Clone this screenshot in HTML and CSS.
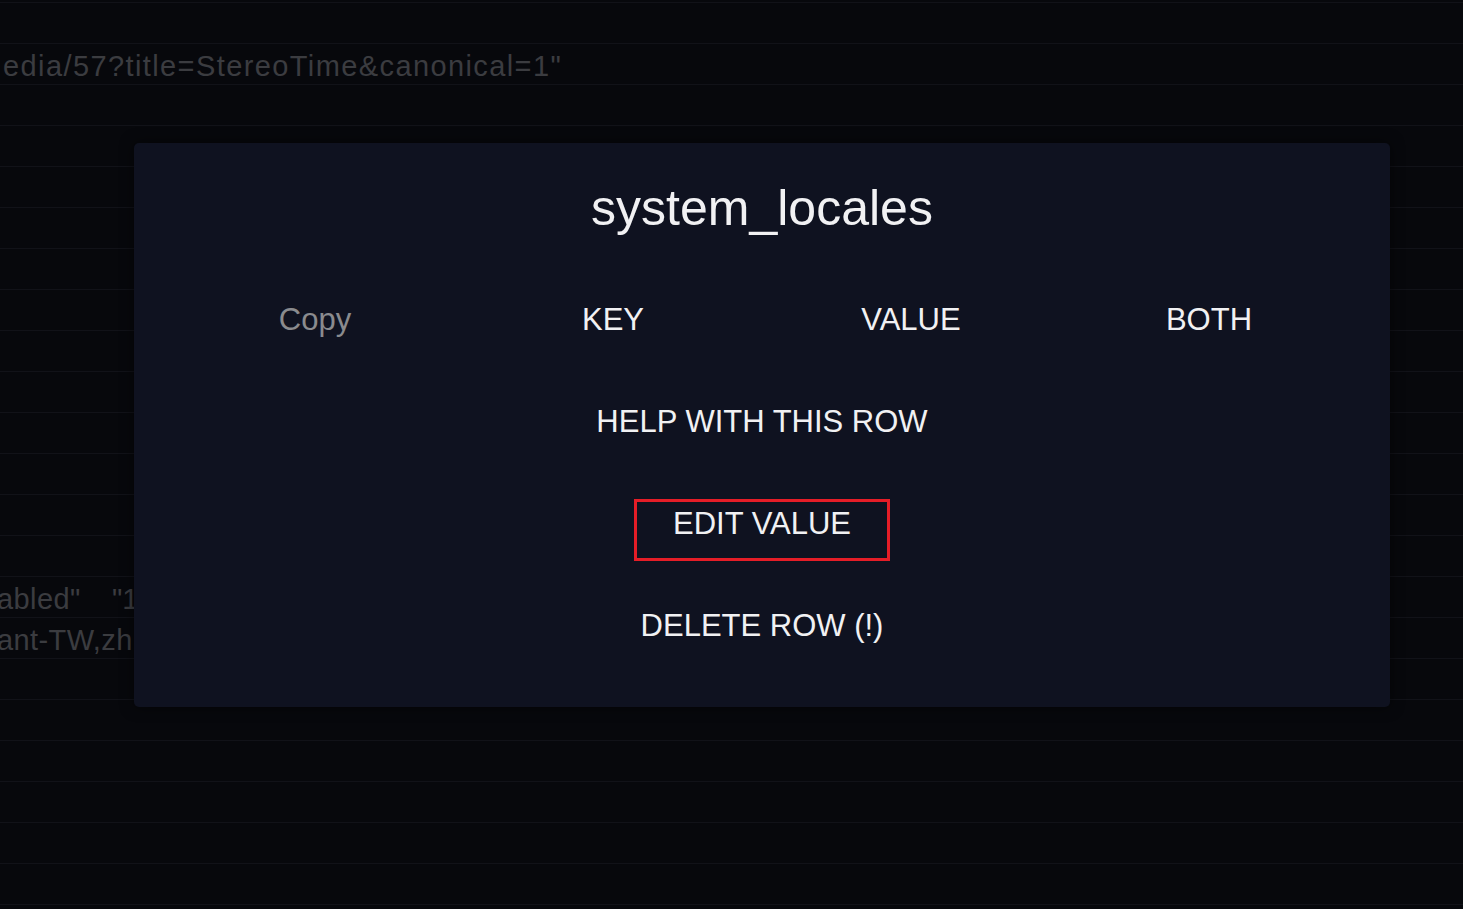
FILE: index.html
```html
<!DOCTYPE html>
<html>
<head>
<meta charset="utf-8">
<link rel="stylesheet" href="styles.css">
</head>
<body>
<div class="table">
  <div class="row"></div>
  <div class="row"><span class="cell c-url">edia/57?title=StereoTime&amp;canonical=1"</span></div>
  <div class="row"></div>
  <div class="row"></div>
  <div class="row"></div>
  <div class="row"></div>
  <div class="row"></div>
  <div class="row"></div>
  <div class="row"></div>
  <div class="row"></div>
  <div class="row"></div>
  <div class="row"></div>
  <div class="row"></div>
  <div class="row"></div>
  <div class="row"><span class="cell c-key">abled"</span><span class="cell c-val">"1</span></div>
  <div class="row"><span class="cell c-key">ant-TW,zh</span></div>
  <div class="row"></div>
  <div class="row"></div>
  <div class="row"></div>
  <div class="row"></div>
  <div class="row"></div>
  <div class="row"></div>
  <div class="row"></div>
</div>

<div class="modal">
  <h2 class="title">system_locales</h2>
  <div class="copy-row">
    <span class="btn muted">Copy</span>
    <span class="btn">KEY</span>
    <span class="btn">VALUE</span>
    <span class="btn">BOTH</span>
  </div>
  <div class="actions">
    <span class="btn action">HELP WITH THIS ROW</span>
    <span class="btn action highlighted">EDIT VALUE</span>
    <span class="btn action">DELETE ROW (!)</span>
  </div>
</div>
</body>
</html>
```
FILE: styles.css
```css
html, body {
  margin: 0;
  padding: 0;
  background: #07080c;
  height: 100%;
  overflow: hidden;
  font-family: "Liberation Sans", Arial, Helvetica, sans-serif;
}

.table {
  padding-top: 2px;
  display: flex;
  flex-direction: column;
}

.row {
  box-sizing: border-box;
  flex: none;
  height: 41px;
  border-top: 1px solid #111218;
  display: flex;
  align-items: center;
  padding-top: 4px;
  color: #3b3c40;
  font-size: 29px;
  white-space: nowrap;
  overflow: hidden;
}

.c-url {
  margin-left: 3px;
  letter-spacing: 1.4px;
}

.c-key {
  margin-left: -3px;
  width: 115px;
  letter-spacing: 0.4px;
}

.modal {
  position: absolute;
  left: 134px;
  top: 143px;
  width: 1256px;
  height: 564px;
  box-sizing: border-box;
  background: #0f1220;
  border-radius: 5px;
  box-shadow: 0 0 14px rgba(0, 0, 0, 0.55);
  padding: 33px 32px 44px;
  display: flex;
  flex-direction: column;
  align-items: center;
}

.title {
  margin: 0 0 55px;
  font-weight: normal;
  font-size: 50px;
  line-height: 64px;
  color: #f1f1f3;
  text-align: center;
}

.copy-row {
  align-self: stretch;
  display: grid;
  grid-template-columns: repeat(4, 1fr);
}

.btn {
  display: block;
  height: 62px;
  line-height: 50px;
  font-size: 31px;
  color: #f1f1f3;
  text-align: center;
}

.btn.muted {
  color: #8a8b8e;
}

.actions {
  margin-top: 40px;
  display: flex;
  flex-direction: column;
  align-items: center;
  gap: 40px;
}

.action {
  box-sizing: border-box;
  padding: 0 34px;
  border: 3px solid transparent;
  line-height: 44px;
}

.highlighted {
  width: 256px;
  padding: 0;
  border-color: #e51d27;
}
```
